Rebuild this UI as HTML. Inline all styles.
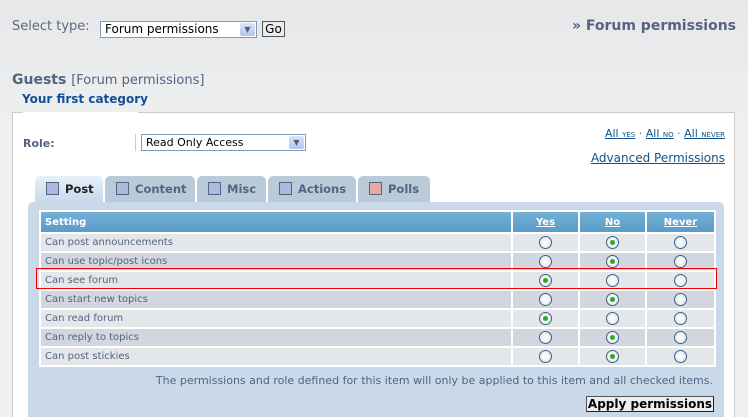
<!DOCTYPE html>
<html><head><style>
html,body{margin:0;width:748px;height:417px;overflow:hidden}
body{background:linear-gradient(#e6e7e9,#eeefef 120px,#efefef);font-family:Verdana,"DejaVu Sans",sans-serif;position:relative;color:#536482}
.a{position:absolute}
.sel{position:absolute;background:#fff;border:1px solid #7f9db9;font-size:11px;color:#000;box-sizing:border-box;padding:1px 4px}
.arr{position:absolute;right:1px;top:1px;width:15px;height:13px;background:linear-gradient(#dbe4f8,#b3c5ee);border-radius:2px;font-size:8px;color:#4d6185;text-align:center;line-height:13px}
.tab{position:absolute;top:176px;height:26px;background:#b9cad8;border-radius:5px 5px 0 0;font-weight:bold;font-size:11.5px;color:#536482;line-height:26px;box-sizing:border-box;padding-left:11px}
.tab i{display:inline-block;width:11px;height:11px;background:#b0b8de;border:1px solid #536482;vertical-align:-2px;margin-right:6px}
table{position:absolute;left:39px;top:210px;width:675px;border-collapse:collapse;font-size:10px;table-layout:fixed}
tr{height:19px}
td,th{border:2px solid #fff;padding:0 4px;text-align:left;height:15px;line-height:15px}
th{background:linear-gradient(#72b0d8,#5a9cc6);color:#fff;font-weight:bold;font-size:10px;height:19px;line-height:19px}
th.c{text-align:center;text-decoration:underline}
td.c{text-align:center;padding:0}
tr.l td{background:#e3e7ea}tr.d td{background:#d2d6de}
.r{display:inline-block;width:11px;height:11px;border:1px solid #3b5f88;border-radius:50%;background:radial-gradient(#fff,#dfe3e8);vertical-align:middle;position:relative}
.r.on::after{content:"";position:absolute;left:3px;top:3px;width:5px;height:5px;border-radius:50%;background:#2ca82c}
a{color:#105289}
</style></head><body>
<div class="a" style="left:12px;top:19px;font-size:13px;color:#5b6b7f">Select type:</div>
<div class="sel" style="left:100px;top:21px;width:157px;height:17px;font-size:12px;padding-top:0">Forum permissions<div class="arr">▼</div></div>
<div class="a" style="left:262px;top:21px;width:23px;height:16px;border:1px solid #555;background:#ececec;font-size:12px;color:#000;text-align:center;line-height:15px;box-sizing:border-box">Go</div>
<div class="a" style="right:12px;top:18px;font-size:14px;font-weight:bold;color:#536482">» Forum permissions</div>
<div class="a" style="left:12px;top:72px;font-size:14px;font-weight:bold;color:#536482">Guests <span style="font-weight:normal;font-size:13px">[Forum permissions]</span></div>
<div class="a" style="left:22px;top:92px;font-size:12px;font-weight:bold;color:#115098">Your first category</div>
<div class="a" style="left:12px;top:112px;width:723px;height:310px;background:#fff;border:1px solid #ccc;box-sizing:border-box"></div>
<div class="a" style="left:23px;top:112px;width:115px;height:1px;background:#fff"></div>
<div class="a" style="left:23px;top:137px;font-size:11px;font-weight:bold">Role:</div>
<div class="a" style="left:135px;top:134px;width:1px;height:17px;background:#ccc"></div>
<div class="sel" style="left:141px;top:134px;width:165px;height:17px;font-size:11px">Read Only Access<div class="arr">▼</div></div>
<div class="a" style="right:23px;top:127px;font-size:11px"><a href="#">All <span style="font-variant:small-caps;font-size:10px">yes</span></a> · <a href="#">All <span style="font-variant:small-caps;font-size:10px">no</span></a> · <a href="#">All <span style="font-variant:small-caps;font-size:10px">never</span></a></div>
<div class="a" style="right:23px;top:151px;font-size:12px"><a href="#">Advanced Permissions</a></div>
<div class="tab" style="left:35px;width:68px;background:linear-gradient(#e6f0fa,#c9d9e9);color:#222"><i></i>Post</div>
<div class="tab" style="left:105px;width:90px"><i></i>Content</div>
<div class="tab" style="left:197px;width:69px"><i></i>Misc</div>
<div class="tab" style="left:268px;width:88px"><i></i>Actions</div>
<div class="tab" style="left:358px;width:72px"><i style="background:#e8a8a8"></i>Polls</div>
<div class="a" style="left:28px;top:202px;width:696px;height:220px;background:#c9d9e9;border-radius:5px 5px 0 0"></div>
<table>
<colgroup><col style="width:472px"><col style="width:67px"><col style="width:67px"><col style="width:69px"></colgroup>
<tr style="height:22px"><th>Setting</th><th class="c">Yes</th><th class="c">No</th><th class="c">Never</th></tr>
<tr class="l"><td>Can post announcements</td><td class="c"><span class="r"></span></td><td class="c"><span class="r on"></span></td><td class="c"><span class="r"></span></td></tr>
<tr class="d"><td>Can use topic/post icons</td><td class="c"><span class="r"></span></td><td class="c"><span class="r on"></span></td><td class="c"><span class="r"></span></td></tr>
<tr class="l"><td>Can see forum</td><td class="c"><span class="r on"></span></td><td class="c"><span class="r"></span></td><td class="c"><span class="r"></span></td></tr>
<tr class="d"><td>Can start new topics</td><td class="c"><span class="r"></span></td><td class="c"><span class="r on"></span></td><td class="c"><span class="r"></span></td></tr>
<tr class="l"><td>Can read forum</td><td class="c"><span class="r on"></span></td><td class="c"><span class="r"></span></td><td class="c"><span class="r"></span></td></tr>
<tr class="d"><td>Can reply to topics</td><td class="c"><span class="r"></span></td><td class="c"><span class="r on"></span></td><td class="c"><span class="r"></span></td></tr>
<tr class="l"><td>Can post stickies</td><td class="c"><span class="r"></span></td><td class="c"><span class="r on"></span></td><td class="c"><span class="r"></span></td></tr>
</table>
<div class="a" style="left:36px;top:268px;width:681px;height:21px;border:1px solid #e00;box-sizing:border-box"></div>
<div class="a" style="right:35px;top:374px;font-size:11px">The permissions and role defined for this item will only be applied to this item and all checked items.</div>
<div class="a" style="left:586px;top:396px;width:128px;height:16px;border:1px solid #555;border-right-color:#222;border-bottom-color:#222;background:#eee;color:#000;font-weight:bold;font-size:12px;text-align:center;line-height:15px;box-sizing:border-box">Apply permissions</div>
</body></html>
